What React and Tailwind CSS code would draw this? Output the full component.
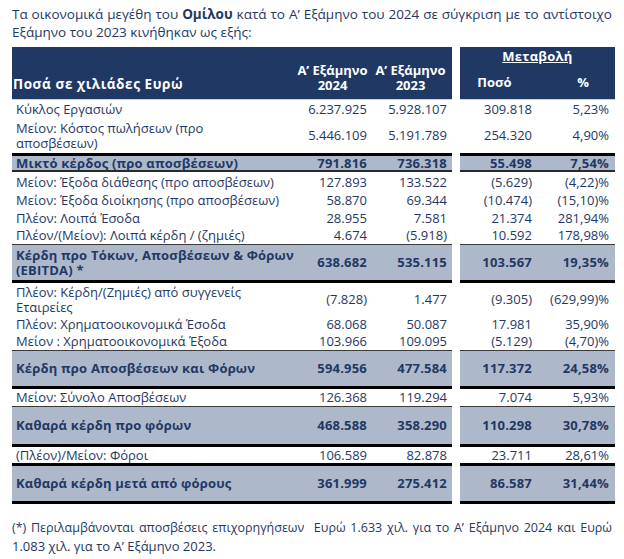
import React from "react";

function Row({ h, label, v, bold, left = "", right = "" }) {
  const w = bold ? "font-bold tracking-[0.2px]" : "font-normal";
  return (
    <div className={`flex gap-2 ${h}`}>
      <div className={`w-[440px] flex items-center ${left}`}>
        <div className={`w-[278px] pl-1 leading-[15px] whitespace-nowrap ${w}`}>{label}</div>
        <div className={`w-[81px] text-right pr-1 ${w}`}>{v[0]}</div>
        <div className={`w-[81px] text-right pr-[5px] ${w}`}>{v[1]}</div>
      </div>
      <div className={`w-[155px] flex items-center ${right}`}>
        <div className={`w-[77px] text-right pr-[5px] ${w}`}>{v[2]}</div>
        <div className={`w-[78px] text-right pr-[6px] ${w}`}>{v[3]}</div>
      </div>
    </div>
  );
}

export default function App() {
  const grayThin = "bg-[#adb9ca] border-t border-t-[#3c3c3c] border-b-[3px] border-b-black";
  const grayThick = "bg-[#adb9ca] border-t-[3px] border-t-black border-b-[3px] border-b-black";
  const grayTop = "bg-[#adb9ca] border-t-[3px] border-t-black border-b-2 border-b-[#2a2a2a]";
  return (
    <div className="w-[624px] h-[559px] bg-white text-[#1f3864] text-[13px] px-3 pt-[5px]" style={{ fontFamily: '"Open Sans", "DejaVu Sans", sans-serif' }}>
      <p className="text-justify leading-[18px] text-[13.5px]">
        Τα οικονομικά μεγέθη του <span className="font-bold">Ομίλου</span> κατά το Α’ Εξάμηνο του 2024 σε σύγκριση με το αντίστοιχο Εξάμηνο του 2023 κινήθηκαν ως εξής:
      </p>
      <div className="mt-[6px] leading-[17px]">
        {/* Header */}
        <div className="flex gap-2 h-[53px] text-white font-bold">
          <div className="w-[440px] flex items-end bg-[#1f3864] border-b border-b-[#c9d3e3] pb-[6px]">
            <div className="w-[278px] pl-[1px] leading-[16px] text-[13.5px] tracking-[0.6px] pb-[1px]">Ποσά σε χιλιάδες Ευρώ</div>
            <div className="w-[81px] text-center leading-[15px] pl-[4px] whitespace-nowrap">Α’ Εξάμηνο<br />2024</div>
            <div className="w-[81px] text-center leading-[15px] pr-[2px] whitespace-nowrap">Α’ Εξάμηνο<br />2023</div>
          </div>
          <div className="w-[155px] flex flex-col bg-[#1f3864] border-b border-b-[#c9d3e3]">
            <div className="text-center underline mt-[1px] h-[16px] leading-[16px] tracking-[0.3px]">Μεταβολή</div>
            <div className="flex mt-[11px] leading-[15px]">
              <div className="w-[77px] text-center pr-[8px]">Ποσό</div>
              <div className="w-[78px] text-center pl-[14px]">%</div>
            </div>
          </div>
        </div>

        <Row h="h-[18px]" label="Κύκλος Εργασιών" v={["6.237.925", "5.928.107", "309.818", "5,23%"]} />
        <Row h="h-[35px]" label={<>Μείον: Κόστος πωλήσεων (προ<br />αποσβέσεων)</>} v={["5.446.109", "5.191.789", "254.320", "4,90%"]} />
        <Row h="h-[19px]" bold label="Μικτό κέρδος (προ αποσβέσεων)" v={["791.816", "736.318", "55.498", "7,54%"]}
          left={grayTop} right={grayTop} />
        <Row h="h-[20px]" label="Μείον: Έξοδα διάθεσης (προ αποσβέσεων)" v={["127.893", "133.522", "(5.629)", "(4,22)%"]} />
        <Row h="h-[17px]" label="Μείον: Έξοδα διοίκησης (προ αποσβέσεων)" v={["58.870", "69.344", "(10.474)", "(15,10)%"]} />
        <Row h="h-[18px]" label="Πλέον: Λοιπά Έσοδα" v={["28.955", "7.581", "21.374", "281,94%"]} />
        <Row h="h-[17px]" label="Πλέον/(Μείον): Λοιπά κέρδη / (ζημιές)" v={["4.674", "(5.918)", "10.592", "178,98%"]} />
        <Row h="h-[39px]" bold label={<>Κέρδη προ Τόκων, Αποσβέσεων &amp; Φόρων<br />(EBITDA) *</>} v={["638.682", "535.115", "103.567", "19,35%"]}
          left={grayThin} right={grayThin} />
        <Row h="h-[33px]" label={<>Πλέον: Κέρδη/(Ζημιές) από συγγενείς<br />Εταιρείες</>} v={["(7.828)", "1.477", "(9.305)", "(629,99)%"]} />
        <Row h="h-[17px]" label="Πλέον: Χρηματοοικονομικά Έσοδα" v={["68.068", "50.087", "17.981", "35,90%"]} />
        <Row h="h-[17px]" label="Μείον : Χρηματοοικονομικά Έξοδα" v={["103.966", "109.095", "(5.129)", "(4,70)%"]} />
        <Row h="h-[39px]" bold label="Κέρδη προ Αποσβέσεων και Φόρων" v={["594.956", "477.584", "117.372", "24,58%"]}
          left={grayThin} right={grayThin} />
        <Row h="h-[17px]" label="Μείον: Σύνολο Αποσβέσεων" v={["126.368", "119.294", "7.074", "5,93%"]} />
        <Row h="h-[41px]" bold label="Καθαρά κέρδη προ φόρων" v={["468.588", "358.290", "110.298", "30,78%"]}
          left={grayThin} right={grayThin} />
        <Row h="h-[16px]" label="(Πλέον)/Μείον: Φόροι" v={["106.589", "82.878", "23.711", "28,61%"]} />
        <Row h="h-[41px]" bold label="Καθαρά κέρδη μετά από φόρους" v={["361.999", "275.412", "86.587", "31,44%"]}
          left={grayThick} right={grayThick} />
      </div>
      <div className="mt-[14px] leading-[19px] text-[12.5px] w-[600px]">
        <p className="whitespace-nowrap text-justify [text-align-last:justify]">
          (*) Περιλαμβάνονται αποσβέσεις επιχορηγήσεων&nbsp; Ευρώ 1.633 χιλ. για το Α’ Εξάμηνο 2024 και Ευρώ
        </p>
        <p className="text-[13px]">1.083 χιλ. για το Α’ Εξάμηνο 2023.</p>
      </div>
    </div>
  );
}
